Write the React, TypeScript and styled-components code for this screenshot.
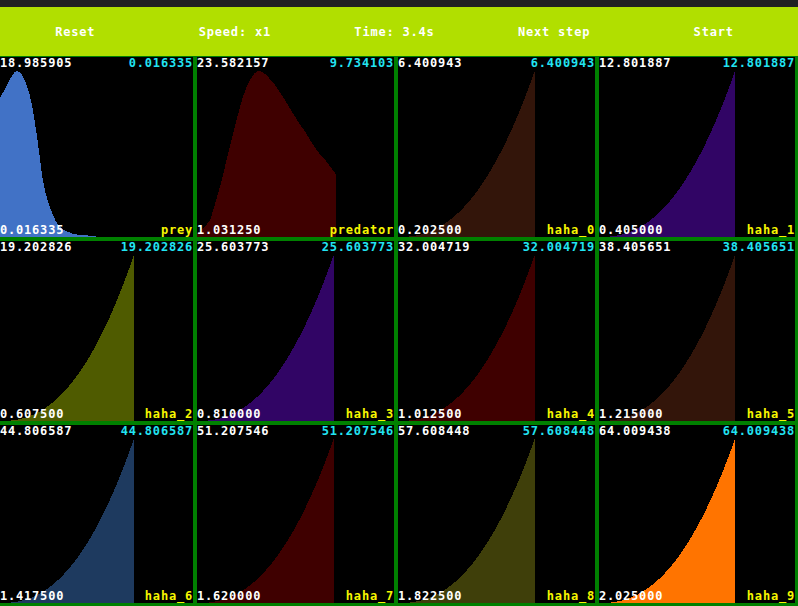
import React from "react";
import styled, { createGlobalStyle } from "styled-components";

const Global = createGlobalStyle`
  html, body { margin: 0; padding: 0; background: #000; overflow: hidden; }
  body { font-family: "DejaVu Sans Mono", "Liberation Mono", monospace; }
`;

const Page = styled.div`
  width: 798px;
  height: 606px;
  display: flex;
  flex-direction: column;
  background: #008000;
`;

const TopStrip = styled.div`
  height: 7px;
  background: #212121;
  flex: none;
`;

const Toolbar = styled.div`
  height: 49px;
  flex: none;
  display: flex;
  background: #b1df00;
`;

const ToolButton = styled.div`
  flex: 1;
  display: flex;
  align-items: center;
  justify-content: center;
  padding-right: 9px;
  color: #fff;
  font-weight: bold;
  font-size: 12px;
  letter-spacing: 0.8px;
  white-space: pre;
  cursor: pointer;
`;

const Grid = styled.div`
  flex: 1;
  display: grid;
  grid-template-columns: 193px 197px 197px 196px;
  grid-template-rows: 180px 180px 178px;
  gap: 4px;
  padding: 1px 3px 3px 0;
`;

const Cell = styled.div`
  display: grid;
  background: #000;
  overflow: hidden;
  min-width: 0;
  min-height: 0;
`;

const Chart = styled.svg`
  grid-area: 1 / 1;
  width: 100%;
  height: 100%;
  display: block;
`;

const Labels = styled.div`
  grid-area: 1 / 1;
  display: flex;
  flex-direction: column;
  justify-content: space-between;
  padding-bottom: 1px;
  z-index: 1;
`;

const LabelRow = styled.div`
  display: flex;
  justify-content: space-between;
  font-weight: bold;
  font-size: 12px;
  line-height: 12px;
  letter-spacing: 0.8px;
  white-space: pre;
`;

const Label = styled.span<{ $tone: "white" | "cyan" | "yellow" }>`
  color: ${(p) =>
    p.$tone === "cyan" ? "#22e4f2" : p.$tone === "yellow" ? "#f6f600" : "#ffffff"};
`;

type Series = {
  name: string;
  max: string;
  last: string;
  min: string;
  color: string;
  points: [number, number][];
};

const W = 196;
const H = 180;
const TOP = 14;

function powerCurve(): [number, number][] {
  const pts: [number, number][] = [];
  const end = 136;
  for (let x = 0; x <= end; x += 2) {
    const t = x / end;
    pts.push([x, Math.pow(t, 2.35)]);
  }
  pts.push([end, 1]);
  return pts;
}

const preyPts: [number, number][] = [
  [0, 0.84], [5, 0.89], [10, 0.95], [15, 0.995], [18, 1.0], [22, 0.98], [26, 0.93],
  [30, 0.86], [33, 0.78], [37, 0.63], [40, 0.5], [43, 0.36], [46, 0.27], [50, 0.19],
  [54, 0.13], [57, 0.09], [62, 0.055], [67, 0.035], [74, 0.02], [80, 0.013], [97, 0.006], [98, 0],
];

const predatorPts: [number, number][] = [
  [0, 0.02], [6, 0.05], [13, 0.1], [19, 0.22], [25, 0.35], [30, 0.48], [35, 0.6],
  [40, 0.72], [45, 0.83], [49, 0.9], [53, 0.95], [57, 0.985], [61, 1.0], [65, 0.995],
  [70, 0.97], [77, 0.92], [85, 0.85], [92, 0.78], [100, 0.7], [108, 0.63], [115, 0.56],
  [122, 0.5], [128, 0.46], [133, 0.42], [138, 0.38],
];

const mins = ["0.202500", "0.405000", "0.607500", "0.810000", "1.012500", "1.215000", "1.417500", "1.620000", "1.822500", "2.025000"];
const maxs = ["6.400943", "12.801887", "19.202826", "25.603773", "32.004719", "38.405651", "44.806587", "51.207546", "57.608448", "64.009438"];

const haha = (i: number, color: string): Series => ({
  name: `haha_${i}`,
  max: maxs[i],
  last: maxs[i],
  min: mins[i],
  color,
  points: powerCurve(),
});

const series: Series[] = [
  { name: "prey", max: "18.985905", last: "0.016335", min: "0.016335", color: "#4172c6", points: preyPts },
  { name: "predator", max: "23.582157", last: "9.734103", min: "1.031250", color: "#3f0000", points: predatorPts },
  haha(0, "#33150a"),
  haha(1, "#310565"),
  haha(2, "#4f5b00"),
  haha(3, "#310565"),
  haha(4, "#3f0000"),
  haha(5, "#33150a"),
  haha(6, "#1e3a5f"),
  haha(7, "#3f0000"),
  haha(8, "#3f3f0a"),
  haha(9, "#ff7400"),
];

function toPath(points: [number, number][]): string {
  const plotH = H - TOP;
  const first = points[0][0];
  const last = points[points.length - 1][0];
  let d = `M ${first} ${H}`;
  for (const [x, v] of points) {
    d += ` L ${x} ${(H - v * plotH).toFixed(2)}`;
  }
  d += ` L ${last} ${H} Z`;
  return d;
}

function PlotCell({ s }: { s: Series }) {
  return (
    <Cell>
      <Chart viewBox={`0 0 ${W} ${H}`} preserveAspectRatio="none">
        <path d={toPath(s.points)} fill={s.color} shapeRendering="crispEdges" />
      </Chart>
      <Labels>
        <LabelRow>
          <Label $tone="white">{s.max}</Label>
          <Label $tone="cyan">{s.last}</Label>
        </LabelRow>
        <LabelRow>
          <Label $tone="white">{s.min}</Label>
          <Label $tone="yellow">{s.name}</Label>
        </LabelRow>
      </Labels>
    </Cell>
  );
}

export default function App() {
  return (
    <Page>
      <Global />
      <TopStrip />
      <Toolbar>
        <ToolButton>Reset</ToolButton>
        <ToolButton>Speed: x1</ToolButton>
        <ToolButton>Time: 3.4s</ToolButton>
        <ToolButton>Next step</ToolButton>
        <ToolButton>Start</ToolButton>
      </Toolbar>
      <Grid>
        {series.map((s) => (
          <PlotCell key={s.name} s={s} />
        ))}
      </Grid>
    </Page>
  );
}
